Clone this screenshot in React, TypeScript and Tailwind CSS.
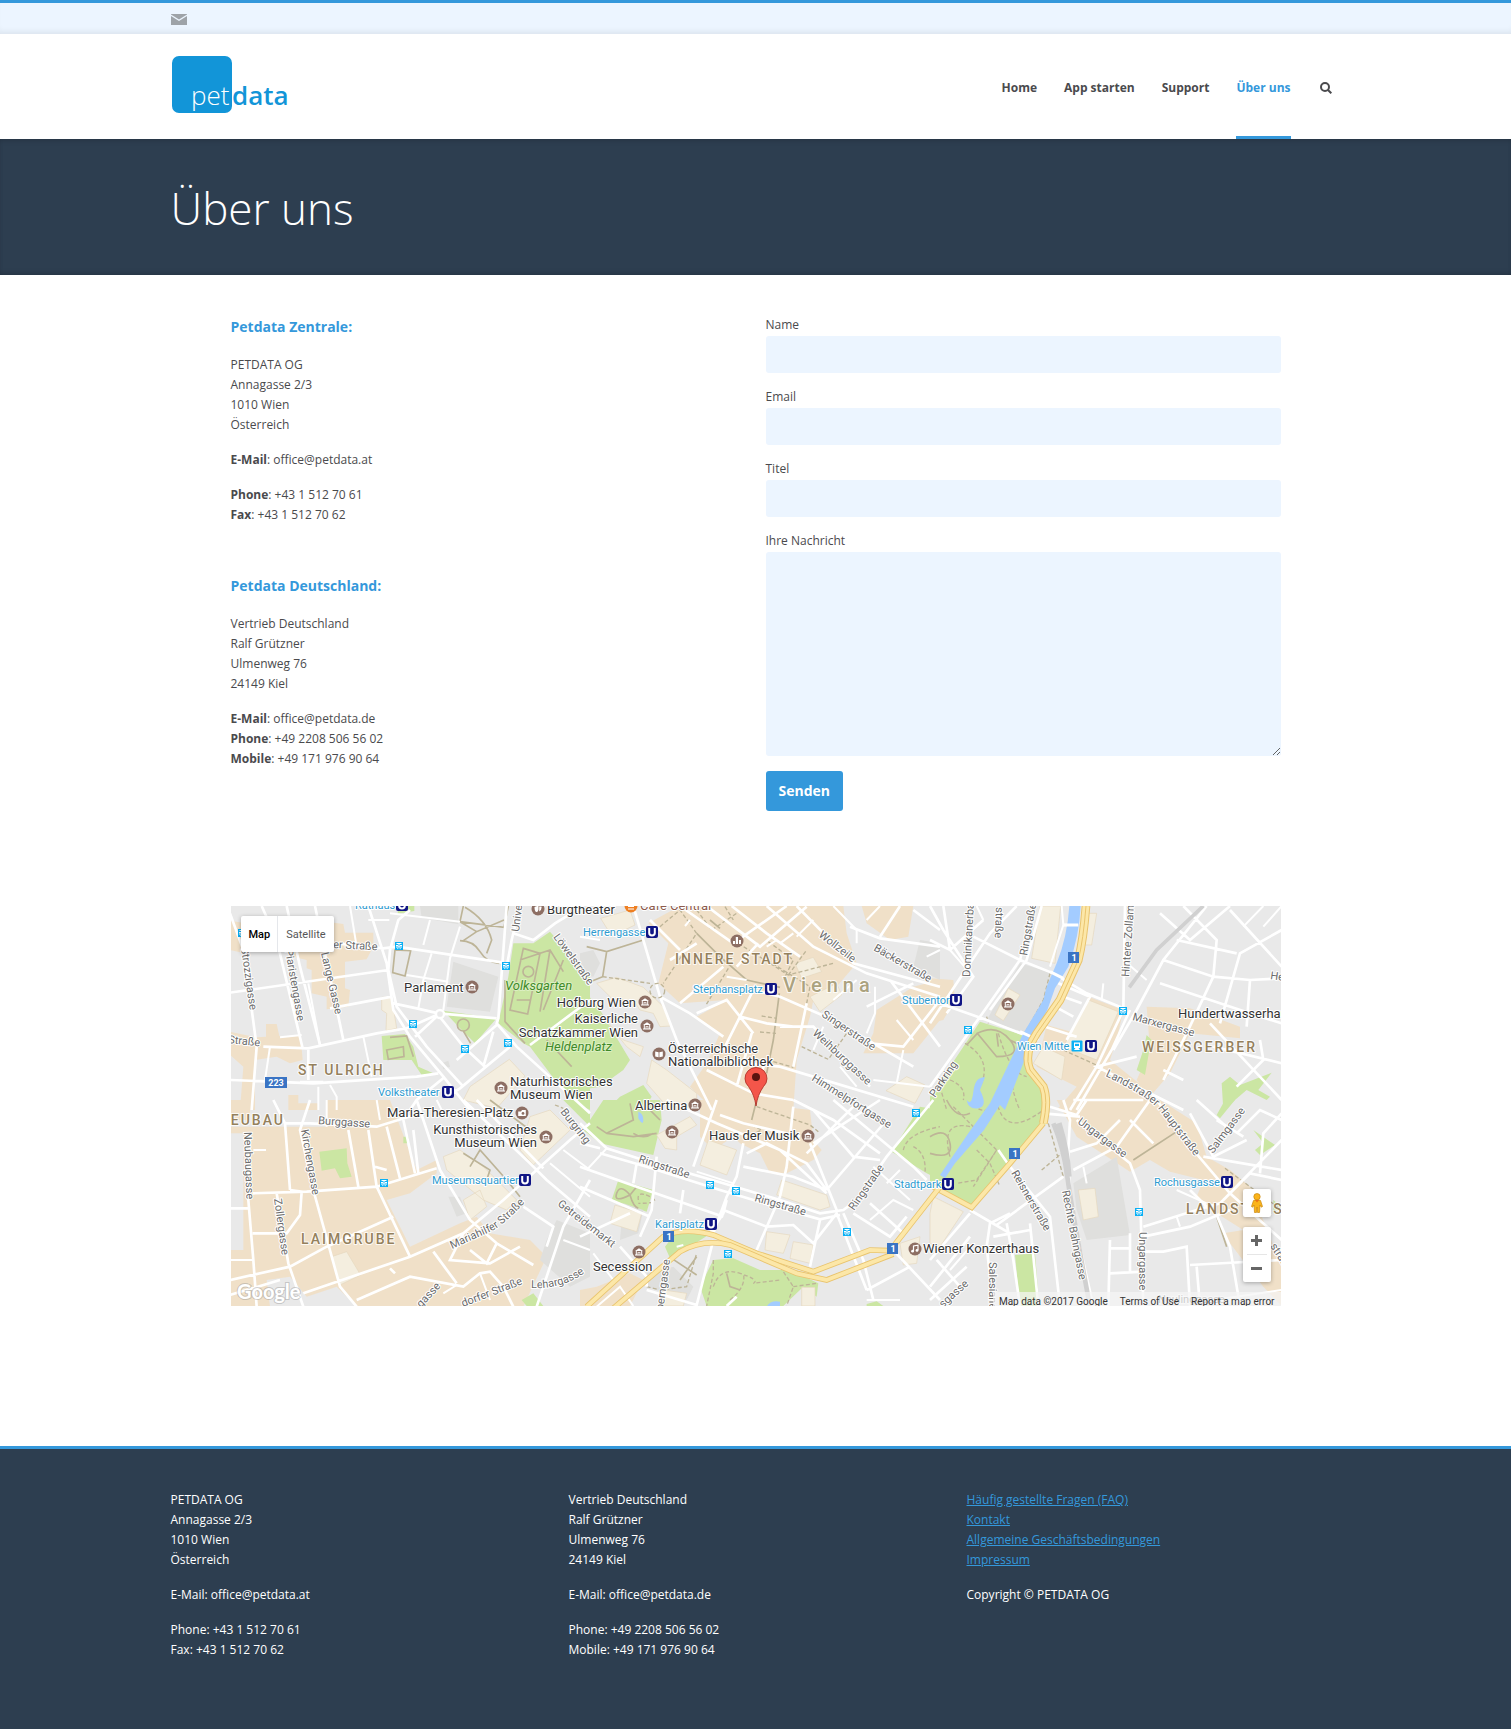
import React from "react";

/* ------------------------------------------------------------------ */
/* City map: tiles are drawn in a 3x coordinate space and scaled down. */
/* ------------------------------------------------------------------ */

type Tile = {
  x: number;
  y: number;
  commercial: string;
  park: string;
  block: string;
  building: string;
  trail: string;
  dashed: string;
  roads: string;
  thin: string;
};

const TILES: Tile[] = [
  {
    x: 0,
    y: 0,
    commercial:
      "M0 62L45 70 45 160 0 150ZM312 68L340 72 345 98 430 98 430 140 410 178 345 185 345 265 360 270 355 320 290 328 290 290 245 280 245 210 230 205 230 180 180 168 180 155 312 155ZM108 372L140 372 148 408 212 408 218 480 180 490 140 470 75 480 75 630 30 630 40 500 0 465 0 395 80 412 108 410ZM175 585H205V610H265V630H175ZM320 612H375V630H320Z",
    park: "M850 130L910 130 960 95 1080 230 1080 630 1060 620 990 560 900 440 880 430 805 370 835 230ZM640 332L800 355 735 430 690 385ZM455 408L525 402 550 440 565 500 610 520 575 525 545 480 460 480ZM505 18H553V33L503 41Z",
    block:
      "M670 185L805 230 780 335 650 320ZM570 18H685V73L575 53ZM635 490L655 482 660 500 640 508Z",
    building:
      "M455 292L485 290 500 385 468 392 470 340 455 330ZM838 478L885 528 800 625 700 600 720 560Z",
    trail:
      "M700 18L690 65 822 82 835 18M690 122Q730 122 750 155T808 190M690 65L740 95 822 60M705 22Q770 60 785 120L770 160M740 95L700 122M495 150L542 152 525 228 488 218ZM880 145L840 330 893 342 930 160ZM870 180L960 150 1000 215M860 300H900M860 265H905M960 150L930 335M1000 180L940 330M895 215m-16 0a16 16 0 1 0 32 0a16 16 0 1 0 -32 0M825 240V365L885 430M470 450L520 440 522 470 475 478ZM480 412L530 408 550 470M700 375m-18 0a18 18 0 1 0 36 0a18 18 0 1 0 -36 0M700 393L722 430M950 420L1025 500",
    dashed: "",
    roads:
      "M0 40L40 150 60 290 80 440 65 630M95 18L140 120 218 445M235 450V540M170 18L210 200 270 435M255 18L270 90 340 420M0 278L475 210M300 325L485 290M320 130L460 145 500 140 835 190M415 18L470 190 490 330 540 410 640 530 720 630M540 30L505 60 480 150 475 210 500 320 590 440 700 560M100 440L235 445 440 400 530 385 620 345M490 310L560 325 625 340 800 355M625 345L700 440 765 500M830 18L805 355 800 370 860 440 1080 640M870 18L845 120 830 200M0 540L250 550 560 530 625 520M800 375L680 480M840 440L690 565 650 590M555 410L625 345M850 100L910 120 975 70 1060 18M900 435L1080 300M790 395L760 500M645 530L560 600 540 630",
    thin: "M480 40L690 65M600 60L580 135M690 80L660 175 640 330M530 225L655 245M605 160L580 240 565 325M400 410L425 530M265 560V630M300 555L320 590V630M150 412L215 405M120 440L105 540M360 18L380 140M235 250L270 435M415 60H478M210 545H280",
  },
  {
    x: 1050,
    y: 0,
    commercial:
      "M205 70L300 18H790L800 100 830 190 770 260 700 300 690 350 650 480 640 630H400L330 560 380 490 420 400 350 350 440 300 300 310 235 250 265 130ZM845 18H1000L985 110 930 120 860 70ZM890 330L1000 260 1040 250 1080 262 1080 360 1000 460 850 460 880 400Z",
    park: "M0 255L60 330 150 480 130 510 60 560 0 570ZM190 555L215 590 190 630H80L120 590Z",
    block: "M0 160L40 150 60 190 40 230 0 220ZM1080 130V240L1000 200 1020 120Z",
    building:
      "M62 55L150 30 165 75 95 108ZM50 250L110 232 190 262 250 320 272 378 240 380 220 340 180 330 160 300 100 300ZM60 340L130 420 190 440 180 470 140 440ZM215 480L260 510 350 580 350 630H270L200 550ZM645 190L700 172 725 215 665 235ZM690 290L770 250 785 285 720 335ZM980 530L1035 555 1005 610 918 572Z",
    trail:
      "M20 140L80 155 190 120M80 155L68 230 20 250M350 100L420 170 500 240 600 262M598 280L580 420 560 520M390 60L420 85",
    dashed:
      "M190 120L230 255M68 230L210 250M240 80L300 30 350 100 250 250M350 30L395 90 470 40M445 205L378 315M565 125L640 180 610 240M475 130L625 225 760 190M545 348L590 355M540 396L588 400M665 440L745 478 800 400M580 485L640 502M680 310L690 260 560 180M625 225L680 150M435 20L460 60",
    roads:
      "M160 18L240 290 290 420 360 560 395 630M210 60L300 150 M300 18L460 130 620 18M380 18L540 140 680 20M455 18L560 100 660 170M535 130L470 200M560 18L700 140 860 220 1080 290M650 18L820 190 1080 260M270 180L350 130M240 290L330 340 430 410M300 310L430 200M350 340L440 300 520 400M400 480L600 500 1000 620M430 450L520 270 600 290 760 360 1000 500M480 350L560 370 640 380M515 400L470 560M600 380L700 380 870 560M680 310L640 500M380 510L520 580 640 600M520 570L560 480M810 80L900 115 1080 140M960 18L900 110M1000 30L1080 90M930 240L1080 440M870 430L970 440 1080 300M860 320L1000 250",
    thin: "M760 18L830 90 830 130M830 240L760 300M885 260V340L860 400M950 360L1000 420M730 380L700 450M330 60L315 78M590 120L560 140M640 100L600 130M700 60L650 110M900 18L860 60M440 230L500 240M880 540L1050 560M780 500L830 560M970 450L950 550M1040 170L1080 150M0 110L60 120",
  },
  {
    x: 2100,
    y: 0,
    commercial:
      "M0 235L70 240 75 300 40 360 0 370ZM475 290L580 330 560 420 540 480 640 560 700 630H380L440 560 320 500 350 375 440 400ZM650 320L780 325 930 380 930 415 780 400 720 520 660 590 620 540 660 450Z",
    park: "M150 365L310 415 285 480 350 580 345 630H0V590ZM650 405L665 420 660 440 645 525 620 510 640 450ZM1025 518L985 570 1020 590 1010 600 950 570 880 630 875 550 900 530 930 555Z",
    block: "M270 190L370 220 330 340 290 400 170 360Z",
    building:
      "M330 18H392L375 190 305 175ZM235 265L270 285 220 362 195 345ZM468 40H500L485 135H462ZM475 300L565 335 500 480 400 440ZM340 440L405 470 395 540 310 490Z",
    trail:
      "M142 400Q200 370 240 420T200 470ZM110 435L142 400M240 420L280 440M200 400L205 440",
    dashed:
      "M170 350L175 370M360 220L340 300 285 400M290 385L330 395M400 450L510 500M105 430Q190 480 150 560T180 630M60 540Q110 560 100 600M205 400Q240 520 290 530M240 520Q250 590 270 630M30 560L50 630",
    roads:
      "M0 370L100 220 180 100 260 18M0 300L170 360 310 415M40 90L130 230 50 340M0 120L60 150 160 60M130 110L270 180 370 220 470 280 580 325M310 18L270 180 150 350 0 560M335 18L290 180 180 330M400 75H440M585 18L580 330 500 500 420 630M600 330L545 450 440 630M345 380L440 410M375 320L430 350M400 290L455 310M385 250L480 290 410 420M550 450L620 330 700 180 830 18M690 250L960 340 1055 370M700 180L850 230 960 240 1055 235M740 120L920 160M690 40L780 120 900 18M760 18L860 120 850 230 770 400 700 540M900 30L1055 200M1055 90L930 160 870 370M620 470L500 500 640 570 760 630M960 240L950 380M850 440L1055 490M840 370L1055 600M700 510L760 540M990 420L1000 480 920 560M0 18L40 90M40 18L60 150",
    thin: "M520 250L515 300M140 18L160 60M395 18L400 75 360 200M60 150L130 230M580 180L650 240M1000 18L940 80M1055 18L1000 80",
  },
  {
    x: 0,
    y: 600,
    commercial:
      "M0 80H160L290 80 290 0 480 0 560 210 620 180 620 220 540 280 470 300 540 440 690 370 740 350 780 400 900 420 950 470 880 620H380L320 560 230 590 180 530 110 540 120 620H0V450H40V100H0ZM0 0H60V60H0Z",
    park: "M268 155L350 145 352 190 365 230 330 235 315 205 275 212ZM520 110H535V130H520ZM1000 0H1050L1080 40V80ZM875 600L910 580 940 618H890Z",
    block:
      "M980 360L1080 400V530L1020 560 930 480 950 420ZM655 290L690 290 710 340 680 350Z",
    building:
      "M305 470L350 455 392 525 330 555ZM900 50L960 30 1020 90 910 195 870 150ZM640 170L690 150 760 200 860 300 830 330 760 300 650 210ZM700 300L750 270 770 320 720 360Z",
    trail:
      "M780 0L900 90M700 160L780 210 770 240M720 200L750 150 830 240 870 290",
    dashed: "M975 15L1000 25",
    roads:
      "M130 0L165 70 180 270M165 70H240L440 80 570 40M240 0L210 90 250 270 330 560 380 620M68 280L230 275 440 260 620 205M60 100L55 300 70 480 80 620M0 325H60M180 270L215 275 210 345 170 400H68M140 280L175 490 220 620M0 540L180 500 290 440 490 350M220 580L540 470 700 400 820 300 920 210 1020 120 1080 70M355 90L385 260M415 90L440 260 540 470M470 80L510 235M550 90L565 220M520 60L555 220M560 0L630 210 720 360 800 430M700 0L900 190 950 240 1080 350M740 0L940 205M610 455L680 550M700 400L660 480 780 490 870 440M720 450L770 490 800 430 910 495M0 585L150 540M470 210L435 200M380 600L540 530 700 560 750 520 780 515 820 560 850 620M480 505L495 520M920 620L1000 380 1080 240M880 320L970 380 950 440",
    thin: "M290 0V80M440 0L450 60M70 150H108M0 480H70M750 520L780 600M960 190L1080 290M1000 150L1080 210M640 580L680 555M1000 420L1080 450M620 0L640 40",
  },
  {
    x: 1050,
    y: 600,
    commercial:
      "M360 0H440L690 30 700 120 725 150 700 180 620 220 570 220 540 160 480 130 460 110 400 150 360 110ZM0 570L50 560 150 520 190 540 150 618H0Z",
    park: "M70 0H240L245 60 220 165 60 130 10 90ZM115 240L220 270 200 335 95 300ZM255 440L285 400 400 395 330 440 270 475ZM400 480L460 475 540 510 630 510 715 550 710 590 670 560 610 618H380L360 560ZM1080 30V240L1040 220 935 155 1020 20ZM860 612L890 604 910 618H860Z",
    block: "M130 310L190 330 175 400 120 420ZM200 520L280 500 340 560 320 600 200 560Z",
    building:
      "M105 315L185 340 170 395 90 370ZM230 105L330 50 350 75 290 110 290 150 255 145ZM385 120L470 150 440 225 360 195ZM605 240L740 285 750 320 720 330 590 285ZM560 395L630 405 610 460 555 450ZM640 425L700 435 690 490 630 475ZM665 562H705V618H665ZM960 430L1020 410 1010 490 970 495ZM250 570L320 580 310 618H240Z",
    trail:
      "M80 100L160 110 230 100M150 10L160 60 80 100 50 80M240 60L200 20M160 100Q190 120 220 100M150 285Q120 250 110 280T150 285M150 285Q160 320 175 325M150 285L170 260M275 475L350 525M350 470L300 540M440 520L450 560 480 570M530 0L515 60",
    dashed:
      "M530 20L690 75 715 95M515 75L545 90 505 110M400 480V520L380 618M400 560Q420 500 480 520T520 550L600 540M450 600Q500 560 490 520M600 500L640 560 620 618M640 560L710 550M200 560L240 570 320 560 350 460M175 300Q170 270 210 290T175 310M970 150Q980 100 1080 80M1000 140Q1040 160 1035 220",
    roads:
      "M0 70L80 145 190 180 430 250 600 300 720 340 790 330 830 300 920 170 1060 0M60 160L200 200 420 270 620 330 720 358 780 345M260 0L410 70 600 150 740 280M410 0L340 200M420 45L490 70 660 110M490 130L470 230 440 290 400 400M500 160L560 130 680 190 740 270M490 200L640 230 740 270M620 200L600 290 530 450M640 20L620 200M430 330L560 380 640 375 700 430 770 340 860 570M790 340L850 480 880 600M720 360L690 500M690 130L770 330M700 30L820 170 900 180M760 0L1000 200 1040 240M640 0L760 60 900 160M830 10L680 160M920 60L740 270M900 0L700 130M0 200L170 260 430 350M170 190L160 250M230 170L215 330 180 410M0 260L210 350M310 270L300 340M0 410L150 340M120 440L200 530 200 560M930 440L1080 600M860 570L990 500M820 340L930 410 980 350M200 570L350 615 400 420M440 300L430 340 390 400M870 310L970 400M0 130L60 145M440 618L470 590",
    thin: "M80 145L20 210M290 440L310 435M350 215L460 250M880 200L990 300M860 600L960 600M870 360L940 300 1000 330M960 210L920 250M50 620L120 560 160 618M40 460L100 540",
  },
  {
    x: 2100,
    y: 600,
    commercial:
      "M380 0H690L800 70 830 170 900 210 960 260 1055 500V618L1000 560 900 430 880 400 940 390 860 340 800 290 820 240 720 215 660 180 600 215 440 110ZM0 180Z",
    park: "M0 0H345L350 70 245 180 125 325 0 260ZM505 262L535 258 550 345 520 350ZM530 355L565 350 575 392 535 397ZM255 465L315 460 328 618H270ZM885 0H915L870 55 860 45ZM970 90L1035 135 990 165 975 150 1000 130ZM1030 300L1055 320 1030 340Z",
    block: "M430 250L560 170 600 405 470 420 440 330Z",
    building:
      "M445 270L495 265 505 350 460 360ZM10 290L100 335 30 440 0 430V340Z",
    trail:
      "M610 180L740 95M860 350L890 440M50 0Q80 60 120 40M0 110Q50 80 60 130T0 160",
    dashed:
      "M70 20L200 150 130 260M200 150L140 240 80 250M200 0Q220 120 340 30M120 80Q30 60 60 170M355 70L400 230M335 210L395 160M140 150L180 190 210 260M885 205L960 260 1055 330",
    roads:
      "M430 0L640 0M340 40L450 50M360 20L440 45 470 0M400 0L420 60 415 150 420 310 490 618M420 155L500 130 570 60M440 60L600 190 630 270 640 618M430 210L560 140 660 0M600 60L670 130M680 0L790 150 900 280 1055 420M205 150L240 200 360 350 390 618M240 340L180 370 170 440 190 618M200 375L400 230M190 410L300 390M120 330L240 400M0 480L120 340M120 410L0 560M0 600L110 500M230 370L250 480 270 618M300 370L325 618M640 380L800 330 870 310 1055 120M640 410L780 380 900 330M640 455H700L770 440 780 618M780 495L1055 480M800 500L810 618M860 345L900 440 930 618M540 420L535 618M540 445H600M540 520L640 515M600 400V515M780 40L850 170 950 120M860 60L940 110M820 170L1055 210M880 300L960 220 1055 240M990 220L1000 100 1055 40M920 100L990 30 1055 60M800 0L900 90M780 270L840 330M20 480L90 560",
    thin: "M460 200L470 250M740 350L750 380M740 270L830 310M850 600L1055 570M130 430L60 510",
  },
];

const TILE_LAYERS: { key: Exclude<keyof Tile, "x" | "y">; className: string }[] = [
  { key: "commercial", className: "fill-[#f0e0c8]" },
  { key: "park", className: "fill-[#cbe6a3]" },
  { key: "block", className: "fill-[#dfdfdd]" },
  { key: "building", className: "fill-[#f4eedf] stroke-[#e6d8be] stroke-2" },
  { key: "trail", className: "fill-none stroke-[#bdb497] stroke-[5px]" },
  { key: "dashed", className: "fill-none stroke-[#bdb497] stroke-4 [stroke-dasharray:12_7]" },
  { key: "thin", className: "fill-none stroke-white stroke-[6px]" },
  { key: "roads", className: "fill-none stroke-white stroke-[8px]" },
];

const EXPRESSWAY = "M2568 18Q2560 120 2545 180L2490 300 2420 400Q2380 460 2400 510L2440 560Q2455 600 2440 670";

const TRUNK_ROADS = [
  "M2440 670L2340 790 2225 922 2110 860",
  "M1070 1220L1300 1010Q1360 980 1450 1005L1580 1060 1750 1115 1920 1050 1980 1052 2130 860",
  "M1150 1225L1350 1055Q1420 1015 1500 1035L1700 1120 1790 1140 1990 1062",
];

type Label = { t: string; x: number; y: number; r?: number; end?: boolean };

const STREETS: Label[] = [
  { t: "er Straße", x: 103, y: 42, r: 3 },
  { t: "Strozzigasse", x: 11, y: 42, r: 82 },
  { t: "Piaristengasse", x: 55, y: 44, r: 80 },
  { t: "Lange Gasse", x: 91, y: 47, r: 77 },
  { t: "Straße", x: -2, y: 137, r: 6 },
  { t: "Löwelstraße", x: 323, y: 31, r: 54 },
  { t: "Universitätsring", x: 289, y: 26, r: -83 },
  { t: "Wollzeile", x: 588, y: 30, r: 38 },
  { t: "Bäckerstraße", x: 643, y: 44, r: 30 },
  { t: "Singerstraße", x: 591, y: 110, r: 34 },
  { t: "Weihburggasse", x: 582, y: 128, r: 43 },
  { t: "Himmelpfortgasse", x: 581, y: 174, r: 32 },
  { t: "Dominikanerbastei", x: 740, y: 71, r: -87 },
  { t: "straße", x: 766, y: 1, r: 92 },
  { t: "Ringstraße", x: 797, y: 50, r: -80 },
  { t: "Hintere Zollamtsstr.", x: 899, y: 71, r: -86 },
  { t: "Marxergasse", x: 902, y: 114, r: 15 },
  { t: "Parkring", x: 705, y: 192, r: -56 },
  { t: "Hetzgasse", x: 1040, y: 73, r: 8 },
  { t: "Burgring", x: 330, y: 206, r: 52 },
  { t: "Burggasse", x: 88, y: 218, r: 4 },
  { t: "Neubaugasse", x: 14, y: 226, r: 88 },
  { t: "Kirchengasse", x: 71, y: 224, r: 80 },
  { t: "Zollergasse", x: 44, y: 293, r: 82 },
  { t: "Getreidemarkt", x: 327, y: 299, r: 38 },
  { t: "dorfer Straße", x: 233, y: 401, r: -21 },
  { t: "gasse", x: 191, y: 402, r: -47 },
  { t: "Ringstraße", x: 408, y: 256, r: 18 },
  { t: "Ringstraße", x: 524, y: 295, r: 16 },
  { t: "Ringstraße", x: 624, y: 305, r: -55 },
  { t: "Operngasse", x: 432, y: 412, r: -82 },
  { t: "Reisnerstraße", x: 781, y: 267, r: 60 },
  { t: "Rechte Bahngasse", x: 832, y: 285, r: 79 },
  { t: "Ungargasse", x: 847, y: 217, r: 37 },
  { t: "Ungargasse", x: 909, y: 326, r: 90 },
  { t: "Salmgasse", x: 983, y: 248, r: -53 },
  { t: "Salesianergasse", x: 759, y: 356, r: 90 },
  { t: "sgasse", x: 713, y: 402, r: -42 },
  { t: "Neulinggasse", x: 928, y: 397 },
  { t: "straße", x: 1040, y: 340, r: 58 },
];

const PLACES: Label[] = [
  { t: "Burgtheater", x: 317, y: 8 },
  { t: "Parlament", x: 174, y: 86 },
  { t: "Hofburg Wien", x: 406, y: 101, end: true },
  { t: "Kaiserliche", x: 408, y: 117, end: true },
  { t: "Schatzkammer Wien", x: 408, y: 131, end: true },
  { t: "Österreichische", x: 438, y: 147 },
  { t: "Nationalbibliothek", x: 438, y: 160 },
  { t: "Naturhistorisches", x: 280, y: 180 },
  { t: "Museum Wien", x: 280, y: 193 },
  { t: "Albertina", x: 405, y: 204 },
  { t: "Maria-Theresien-Platz", x: 157, y: 211 },
  { t: "Kunsthistorisches", x: 307, y: 228, end: true },
  { t: "Museum Wien", x: 307, y: 241, end: true },
  { t: "Haus der Musik", x: 479, y: 234 },
  { t: "Hundertwasserhaus", x: 948, y: 112 },
  { t: "Secession", x: 363, y: 365 },
  { t: "Wiener Konzerthaus", x: 693, y: 347 },
];

const STATIONS: Label[] = [
  { t: "Rathaus", x: 125, y: 3 },
  { t: "Herrengasse", x: 353, y: 30 },
  { t: "Stephansplatz", x: 463, y: 87 },
  { t: "Stubentor", x: 672, y: 98 },
  { t: "Wien Mitte", x: 787, y: 144 },
  { t: "Volkstheater", x: 148, y: 190 },
  { t: "Museumsquartier", x: 202, y: 278 },
  { t: "Karlsplatz", x: 425, y: 322 },
  { t: "Stadtpark", x: 664, y: 282 },
  { t: "Rochusgasse", x: 924, y: 280 },
];

const DISTRICTS: Label[] = [
  { t: "INNERE STADT", x: 445, y: 58 },
  { t: "ST ULRICH", x: 68, y: 169 },
  { t: "WEISSGERBER", x: 912, y: 146 },
  { t: "NEUBAU", x: 55, y: 219, end: true },
  { t: "LAIMGRUBE", x: 71, y: 338 },
  { t: "LANDSTRASSE", x: 956, y: 308 },
];

const SUBWAYS: [number, number][] = [
  [172, -1], [422, 26], [541, 83], [726, 94], [861, 140], [218, 186], [295, 274], [481, 318], [718, 278], [997, 276],
];

const TRAMS: [number, number][] = [
  [12, 27], [169, 40], [276, 60], [183, 118], [235, 143], [278, 137], [893, 105], [738, 124], [154, 277],
  [480, 279], [506, 285], [617, 326], [498, 348], [686, 207], [909, 306],
];

const MUSEUMS: [number, number][] = [
  [242, 81], [415, 96], [417, 120], [465, 199], [271, 182], [316, 231], [578, 230], [442, 226], [409, 346], [778, 98],
];

const SHIELDS: [number, number, string][] = [
  [46, 177, "223"], [844, 52, "1"], [439, 331, "1"], [663, 343, "1"], [785, 248, "1"],
];

function MapLabels({ items, className }: { items: Label[]; className: string }) {
  return (
    <g className={className} paintOrder="stroke" strokeLinejoin="round">
      {items.map((l, i) => (
        <text
          key={i}
          x={l.x}
          y={l.y}
          textAnchor={l.end ? "end" : "start"}
          transform={l.r ? `rotate(${l.r} ${l.x} ${l.y})` : undefined}
        >
          {l.t}
        </text>
      ))}
    </g>
  );
}

function CityMap() {
  return (
    <svg
      viewBox="1 0 1050 400"
      preserveAspectRatio="xMidYMid slice"
      className="block h-full w-full bg-[#e9e9e9] font-[Roboto,sans-serif]"
      role="img"
      aria-label="Karte von Wien"
    >
      <g transform="translate(0 -6) scale(0.33333)">
        {TILE_LAYERS.map((layer) => (
          <g key={layer.key} className={layer.className}>
            {TILES.map((tile) => (
              <path key={`${tile.x}-${tile.y}`} d={tile[layer.key]} transform={`translate(${tile.x} ${tile.y})`} />
            ))}
          </g>
        ))}

        {/* railway lines */}
        <path d="M2920 18L2780 150 2698 262" fill="none" stroke="#d0d0d0" strokeWidth="11" />
        <path d="M2470 670Q2500 740 2512 830T2580 1220" fill="none" stroke="#d0d0d0" strokeWidth="14" />
        <path d="M2485 670Q2510 750 2515 830" fill="none" stroke="#d0d0d0" strokeWidth="20" />

        {/* water */}
        <path
          d="M2518 18H2552Q2548 110 2515 200L2475 265 2452 330 2415 400 2325 630 2310 615 2262 690 2175 790 2145 835 2130 825 2215 700 2280 610 2380 400 2440 300 2450 260 2480 190Q2512 110 2518 18Z"
          fill="#a3ccff"
        />
        <path d="M2265 532Q2235 530 2230 575T2210 600Q2215 630 2245 625T2250 570ZM1225 635Q1240 640 1240 660T1225 655ZM1610 1220Q1620 1200 1650 1205V1220Z" fill="#a3ccff" />
        <path d="M2500 75H2545M2460 215L2500 235M2370 395L2425 420" stroke="#fff" strokeWidth="9" />

        {/* trunk roads */}
        {TRUNK_ROADS.map((d) => (
          <g key={d} fill="none">
            <path d={d} stroke="#e9c46e" strokeWidth="17" />
            <path d={d} stroke="#fce7a8" strokeWidth="12" />
          </g>
        ))}
        <path d={EXPRESSWAY} fill="none" stroke="#e9c46e" strokeWidth="26" />
        <path d={EXPRESSWAY} fill="none" stroke="#fce7a8" strokeWidth="20" />
        <path d={EXPRESSWAY} fill="none" stroke="#e9c46e" strokeWidth="3" />
        <circle cx="630" cy="342" r="12" fill="#e9e9e9" stroke="#fff" strokeWidth="7" />
        <circle cx="1282" cy="272" r="22" fill="none" stroke="#bdb497" strokeWidth="4" strokeDasharray="12 7" />
      </g>

      <MapLabels items={STREETS} className="fill-[#6b6b6b] stroke-white stroke-2 text-[11px]" />
      <g className="fill-[#6b6b6b] stroke-white stroke-2 text-[11px]" paintOrder="stroke">
        <path id="landstr" d="M875 170Q918 190 930 205L975 264" fill="none" stroke="none" />
        <path id="mariah" d="M222 343L262 325Q278 316 304 286" fill="none" stroke="none" />
        <path id="lehar" d="M301 382Q345 384 372 350" fill="none" stroke="none" />
        <text><textPath href="#landstr">Landstraßer Hauptstraße</textPath></text>
        <text><textPath href="#mariah">Mariahilfer Straße</textPath></text>
        <text><textPath href="#lehar">Lehargasse</textPath></text>
      </g>
      <MapLabels items={DISTRICTS} className="fill-[#94805c] stroke-white/80 stroke-2 text-sm font-medium tracking-[2px]" />
      <text x="553" y="86" paintOrder="stroke" className="fill-[#aba27f] stroke-white/80 stroke-2 text-xl font-medium tracking-[5px]">
        Vienna
      </text>
      <MapLabels
        items={[{ t: "Volksgarten", x: 275, y: 84 }, { t: "Heldenplatz", x: 315, y: 145 }]}
        className="fill-[#3f8a2a] stroke-[#dcefc2] stroke-2 text-[13px] italic"
      />
      <MapLabels items={STATIONS} className="fill-[#2e9bd0] stroke-white stroke-2 text-[11px]" />
      <MapLabels items={[{ t: "Café Central", x: 410, y: 4 }]} className="fill-[#8d5b4c] stroke-white stroke-2 text-[13px]" />
      <MapLabels items={PLACES} className="fill-[#333] stroke-white stroke-2 text-[13px]" />

      {SUBWAYS.map(([x, y]) => (
        <g key={`${x}-${y}`} transform={`translate(${x} ${y})`}>
          <rect x="-6" y="-6" width="12" height="12" rx="2" fill="#101585" />
          <path d="M-2.8 -4V1Q-2.8 3.4 0 3.4T2.8 1V-4" fill="none" stroke="#fff" strokeWidth="2" />
        </g>
      ))}
      {TRAMS.map(([x, y]) => (
        <g key={`${x}-${y}`} transform={`translate(${x} ${y})`}>
          <rect x="-4" y="-4" width="8" height="8" fill="#0ab0f5" />
          <path d="M-2.5 -2.5H2.5M-3 1H3M-3 -0.5H-1M1 -0.5H3M0 -2.5V1M-1.7 2.6H-0.7M0.7 2.6H1.7" stroke="#fff" strokeWidth="1" />
        </g>
      ))}
      {MUSEUMS.map(([x, y]) => (
        <g key={`${x}-${y}`} transform={`translate(${x} ${y})`}>
          <circle r="6.5" fill="#8d6e63" />
          <path d="M-4 -1L0 -3.8 4 -1ZM-4 2.4H4V3.6H-4ZM-3.2 -1H-2.2V2.4H-3.2ZM2.2 -1H3.2V2.4H2.2ZM-1.4 0.2H1.4V2.4H0.6V1H-0.6V2.4H-1.4Z" fill="#fff" />
        </g>
      ))}
      <g transform="translate(308 3)">
        <circle r="6.5" fill="#8d6e63" />
        <path d="M-3.5 -2L0.500 -3.500V0.500Q0 3.500 -2 3Q-3.500 2 -3.500 -2ZM1.200 -2.500H3.500Q4 1 1.200 2.500Z" fill="#fff" />
      </g>
      <g transform="translate(429 148)">
        <circle r="6.5" fill="#8d6e63" />
        <path d="M-3.8 -2.6L-0.4 -1.8V3.2L-3.8 2.4ZM3.8 -2.6L0.4 -1.8V3.2L3.8 2.4Z" fill="#fff" />
      </g>
      <g transform="translate(507 35)">
        <circle r="6.5" fill="#8d6e63" />
        <path d="M-4 3V0H-2V3ZM-1.2 3V-4H1V3ZM2 3V-1H4V3Z" fill="#fff" />
      </g>
      <g transform="translate(292 207)">
        <circle r="6.5" fill="#8d6e63" />
        <path d="M-3.8 -1.5H-1L0 -3H3.8V3H-3.8Z" fill="#fff" />
        <circle cx="1" cy="0.4" r="1.4" fill="#8d6e63" />
      </g>
      <g transform="translate(685 343)">
        <circle r="6.5" fill="#8d6e63" />
        <path d="M-1.5 2V-3L3 -3.8V1.2" fill="none" stroke="#fff" strokeWidth="1.2" />
        <circle cx="-2.4" cy="2.2" r="1.4" fill="#fff" />
        <circle cx="2" cy="1.4" r="1.4" fill="#fff" />
      </g>
      <g transform="translate(401 0)">
        <circle r="6.5" fill="#ee7f22" />
        <path d="M-3 -3H3V1H-3ZM-3 2.4H3V3.6H-3Z" fill="#fff" />
      </g>
      <g transform="translate(847 140)">
        <rect x="-5.5" y="-5.5" width="11" height="11" rx="1" fill="#0ab0f5" />
        <path d="M-3 -3.6H3V2H-3ZM-3 4L-1.5 2H1.5L3 4" fill="#fff" />
        <path d="M-2 -2.2H2V0H-2Z" fill="#0ab0f5" />
      </g>
      {SHIELDS.map(([x, y, t]) => (
        <g key={`${x}-${y}`}>
          <rect x={x - (t.length > 1 ? 11 : 6)} y={y - 6} width={t.length > 1 ? 22 : 11} height="11" fill="#3a74c4" />
          <text x={x} y={y + 3} textAnchor="middle" className="fill-white text-[9px] font-bold">{t}</text>
        </g>
      ))}

      {/* location pin */}
      <path d="M526 200Q524.500 189 518.500 180.500A11 11 0 1 1 533.500 180.500Q527.500 189 526 200Z" fill="#f4564a" stroke="#a82a21" strokeWidth="0.8" />
      <circle cx="526" cy="171" r="4" fill="#5a1410" />

      <text x="7" y="393" paintOrder="stroke" className="fill-white stroke-[#8c8c8c]/40 stroke-2 font-[Lato,sans-serif] text-xl font-bold">
        Google
      </text>
    </svg>
  );
}

function MapPanel() {
  return (
    <div className="relative h-[400px] overflow-hidden font-[Roboto,sans-serif]">
      <CityMap />
      <div className="absolute left-[10px] top-[10px] flex h-9 overflow-hidden rounded-xs bg-white text-[11px] shadow-[0_1px_4px_rgba(0,0,0,0.3)]">
        <button type="button" className="pl-2 pr-[7px] pt-px font-medium text-black">Map</button>
        <button type="button" className="border-l border-gray-200 px-2 pt-px text-[#565656]">Satellite</button>
      </div>
      <div className="absolute bottom-6 right-[10px] flex w-7 flex-col gap-[10px]">
        <button type="button" aria-label="Street View" className="flex h-7 items-center justify-center rounded-xs bg-white shadow-[0_1px_4px_rgba(0,0,0,0.3)]">
          <svg viewBox="0 0 14 20" className="h-5 w-3.5" aria-hidden="true">
            <path d="M3.500 7.500Q7 6 10.500 7.500L12.500 13.500 11.300 14.200 10 12 9.500 19.500H7.500L7 14 6.500 19.500H4.500L4 12 2.700 14.200 1.500 13.500Z" fill="#fbb41a" stroke="#c9860f" strokeWidth="0.7" />
            <circle cx="7" cy="3.700" r="3.200" fill="#fbb41a" stroke="#c9860f" strokeWidth="0.7" />
            <path d="M5 7L7 9.500 9 7Z" fill="#e8701a" />
          </svg>
        </button>
        <div className="flex h-[55px] flex-col items-center rounded-xs bg-white shadow-[0_1px_4px_rgba(0,0,0,0.3)]">
          <button type="button" aria-label="Zoom in" className="flex w-full flex-1 items-center justify-center">
            <svg viewBox="0 0 11 11" className="size-[11px]" aria-hidden="true"><path d="M5.500 0V11M0 5.500H11" stroke="#666" strokeWidth="3" /></svg>
          </button>
          <span className="h-px w-5 bg-[#e6e6e6]" />
          <button type="button" aria-label="Zoom out" className="flex w-full flex-1 items-center justify-center">
            <svg viewBox="0 0 11 11" className="size-[11px]" aria-hidden="true"><path d="M0 5.500H11" stroke="#666" strokeWidth="3" /></svg>
          </button>
        </div>
      </div>
      <div className="absolute bottom-0 right-0 flex h-[14px] gap-3 overflow-hidden bg-[#f5f5f5]/70 px-[6px] pt-1 text-[10px] leading-3 text-[#333]">
        <span>Map data ©2017 Google</span>
        <a href="#terms">Terms of Use</a>
        <a href="#report">Report a map error</a>
      </div>
    </div>
  );
}

/* ------------------------------- page ------------------------------ */

function Logo() {
  return (
    <a href="#home" aria-label="petdata">
      <svg viewBox="0 0 120 60" className="block h-[60px] w-[120px] font-['Open_Sans',sans-serif] text-[26px]" aria-hidden="true">
        <rect x="1" y="1" width="60" height="57" rx="7" fill="#1295d8" />
        <text x="20" y="50" className="fill-white font-light">pet</text>
        <text x="61" y="50" className="fill-[#1295d8] font-semibold">data</text>
      </svg>
    </a>
  );
}

const NAV = ["Home", "App starten", "Support"];

function Header() {
  return (
    <header>
      <div className="h-[34px] border-t-3 border-[#3498db] bg-[#ecf5ff] shadow-[inset_0_-6px_6px_-4px_rgba(0,0,0,0.08)]">
        <div className="mx-auto flex h-full max-w-[1170px] items-center pt-px">
          <a href="mailto:office@petdata.at" aria-label="E-Mail">
            <svg viewBox="0 0 16 11" className="block h-[11px] w-4" aria-hidden="true">
              <path d="M0 0H16V0.600L8 5.600 0 0.600Z" fill="#9ea3a8" />
              <path d="M0 2L8 7 16 2V11H0Z" fill="#9ea3a8" />
            </svg>
          </a>
        </div>
      </div>
      <div className="mx-auto flex h-[105px] max-w-[1170px] justify-between pr-[9px]">
        <div className="pt-[21px]">
          <Logo />
        </div>
        <nav className="flex gap-[27px] text-xs font-bold text-[#4a4a4d]">
          {NAV.map((item) => (
            <a key={item} href="#nav" className="flex items-center border-b-3 border-transparent pt-[5px]">{item}</a>
          ))}
          <a href="#about" aria-current="page" className="flex items-center border-b-3 border-[#3498db] pt-[5px] text-[#3498db]">Über uns</a>
          <button type="button" aria-label="Suche" className="pl-[2px] pt-[3px]">
            <svg viewBox="0 0 12 12" className="size-3" fill="none" stroke="#4a4a4d" strokeWidth="2" aria-hidden="true">
              <circle cx="5" cy="5" r="4" />
              <path d="M8 8L11.300 11.300" />
            </svg>
          </button>
        </nav>
      </div>
    </header>
  );
}

type Block = (string | [string, string])[][];

const VIENNA: Block = [
  ["PETDATA OG", "Annagasse 2/3", "1010 Wien", "Österreich"],
  [["E-Mail", "office@petdata.at"]],
  [["Phone", "+43 1 512 70 61"], ["Fax", "+43 1 512 70 62"]],
];

const KIEL: Block = [
  ["Vertrieb Deutschland", "Ralf Grützner", "Ulmenweg 76", "24149 Kiel"],
  [["E-Mail", "office@petdata.de"], ["Phone", "+49 2208 506 56 02"], ["Mobile", "+49 171 976 90 64"]],
];

const KIEL_FOOTER: Block = [KIEL[0], [KIEL[1][0]], KIEL[1].slice(1)];

function Address({ block, strong }: { block: Block; strong?: boolean }) {
  return (
    <address className="flex flex-col gap-[15px] not-italic">
      {block.map((lines, i) => (
        <p key={i}>
          {lines.map((line, j) => (
            <span key={j} className="block">
              {typeof line === "string" ? (
                line
              ) : (
                <>
                  <span className={strong ? "font-bold" : ""}>{line[0]}</span>: {line[1]}
                </>
              )}
            </span>
          ))}
        </p>
      ))}
    </address>
  );
}

const FIELD = "block w-full rounded-[3px] bg-[#ecf5ff] px-3 outline-none";
const FIELD_LABEL = "block leading-[22px]";

function ContactForm() {
  return (
    <form onSubmit={(e) => e.preventDefault()}>
      {[["name", "Name", "text"], ["email", "Email", "email"], ["titel", "Titel", "text"]].map(([id, label, type]) => (
        <div key={id} className="mb-[13px]">
          <label htmlFor={id} className={FIELD_LABEL}>{label}</label>
          <input id={id} type={type} className={`${FIELD} h-[37px]`} />
        </div>
      ))}
      <label htmlFor="nachricht" className={FIELD_LABEL}>Ihre Nachricht</label>
      <textarea id="nachricht" className={`${FIELD} h-[204px] resize py-2`} />
      <button type="submit" className="mt-[15px] h-10 rounded-[3px] bg-[#3498db] px-[13px] text-sm font-bold text-white">
        Senden
      </button>
    </form>
  );
}

export default function App() {
  return (
    <div className="bg-white font-['Open_Sans',sans-serif] text-xs leading-5 text-[#4a4a4d]">
      <Header />
      <div className="bg-[#2d3e50] shadow-[inset_0_4px_6px_-4px_rgba(0,0,0,0.25),inset_0_-4px_6px_-4px_rgba(0,0,0,0.25)]">
        <div className="mx-auto flex h-[136px] max-w-[1170px] items-center pt-[2px]">
          <h1 className="text-[44px] leading-none font-light text-white">Über uns</h1>
        </div>
      </div>

      <main className="mx-auto max-w-[1170px] px-[60px] pb-[140px] pt-[39px]">
        <div className="grid grid-cols-2 gap-5">
          <div className="pt-[3px]">
            <h2 className="mb-[18px] text-sm leading-5 font-bold text-[#3498db]">Petdata Zentrale:</h2>
            <Address block={VIENNA} strong />
            <h2 className="mb-[18px] mt-[51px] text-sm leading-5 font-bold text-[#3498db]">Petdata Deutschland:</h2>
            <Address block={KIEL} strong />
          </div>
          <ContactForm />
        </div>
        <div className="mt-[95px]">
          <MapPanel />
        </div>
      </main>

      <footer className="border-t-3 border-[#3498db] bg-[#2d3e50] pb-[69px] pt-[41px] text-white">
        <div className="mx-auto grid max-w-[1170px] grid-cols-3 gap-6">
          <div className="font-medium">
            <Address block={VIENNA} />
          </div>
          <div className="font-medium">
            <Address block={KIEL_FOOTER} />
          </div>
          <div>
            <ul className="mb-[15px] text-[#3498db]">
              {["Häufig gestellte Fragen (FAQ)", "Kontakt", "Allgemeine Geschäftsbedingungen", "Impressum"].map((t) => (
                <li key={t}>
                  <a href="#footer" className="underline">{t}</a>
                </li>
              ))}
            </ul>
            <p className="font-medium">Copyright © PETDATA OG</p>
          </div>
        </div>
      </footer>
    </div>
  );
}
